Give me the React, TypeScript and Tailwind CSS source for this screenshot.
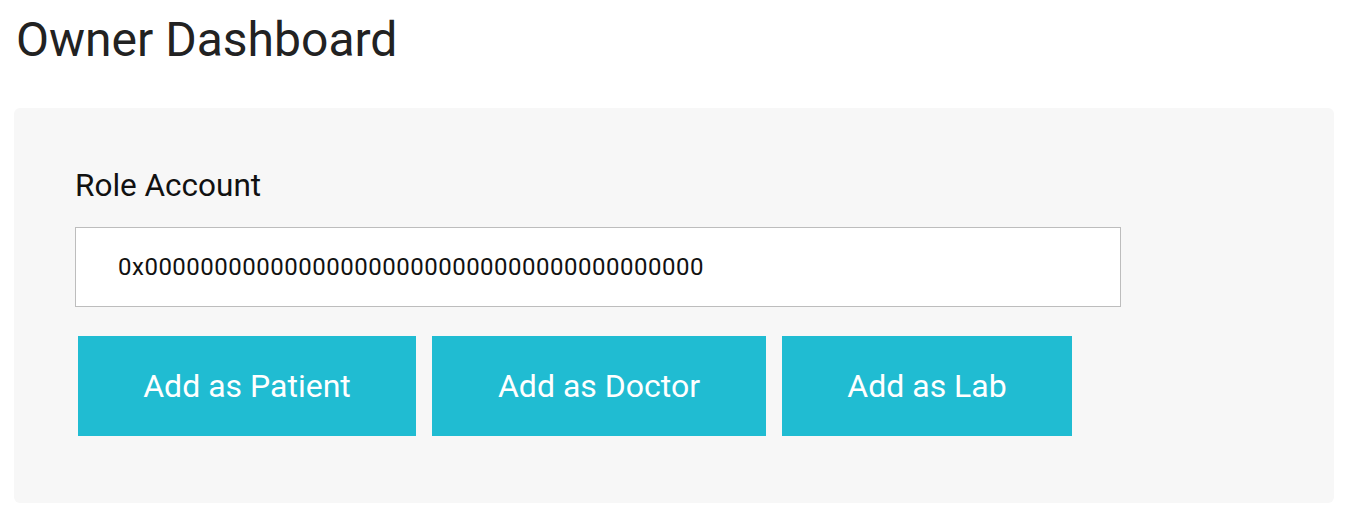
const roles = [
  { label: "Patient", width: "w-[338px]" },
  { label: "Doctor", width: "w-[334px]" },
  { label: "Lab", width: "w-[290px]" },
];

export default function App() {
  return (
    <div className="min-h-[520px] bg-white font-['Roboto',sans-serif]">
      <h1 className="pl-4 pt-[12px] text-[48px] leading-[56px] font-normal text-[#222222]">
        Owner Dashboard
      </h1>

      <section className="mt-[40px] ml-[14px] w-[1320px] rounded-[6px] bg-[#f7f7f7] pt-[59px] pb-[67px] pl-[61px]">
        <label className="block text-[31.5px] leading-[38px] text-[#111111]">Role Account</label>

        <input
          className="mt-[22px] block h-[80px] w-[1046px] border border-[#bdbdbd] bg-white px-[42px] text-[24px] tracking-[0.5px] text-[#111111] outline-none"
          defaultValue="0x0000000000000000000000000000000000000000"
        />

        <div className="mt-[29px] ml-[3px] flex gap-4">
          {roles.map((role) => (
            <button
              key={role.label}
              className={`h-[100px] ${role.width} bg-[#20bcd2] text-center text-[32px] text-white`}
            >
              Add as {role.label}
            </button>
          ))}
        </div>
      </section>
    </div>
  );
}
